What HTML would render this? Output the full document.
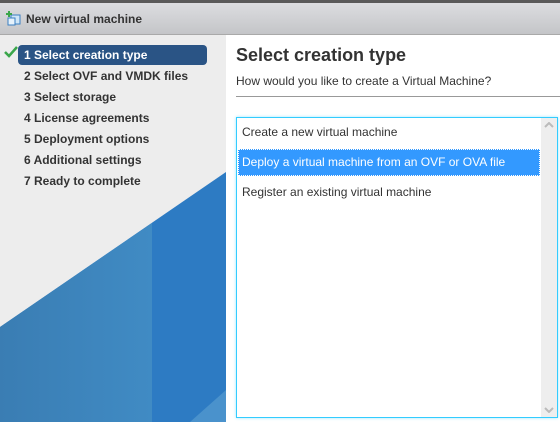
<!DOCTYPE html>
<html><head><style>
body{margin:0;width:560px;height:422px;overflow:hidden;font-family:"Liberation Sans",Arial,sans-serif;background:#fff;position:relative}
.top{position:absolute;left:0;top:0;width:560px;height:3px;background:#5a5a5a}
.hdr{position:absolute;left:0;top:3px;width:560px;height:31px;background:linear-gradient(#dcdde0,#c4c5c8);border-bottom:1px solid #a9a9a9}
.hdr span{position:absolute;left:26px;top:9px;font-size:12px;font-weight:bold;color:#333}
.left{position:absolute;left:0;top:35px;width:226px;height:387px;background:#ededed;overflow:hidden}
.step{position:absolute;left:24px;font-size:12px;font-weight:bold;color:#333}
.sel{position:absolute;left:18px;top:10px;width:189px;height:20px;background:#2a5485;border-radius:4px}
.right{position:absolute;left:226px;top:35px;width:334px;height:387px;background:#fff}
h1{position:absolute;left:10px;top:10px;margin:0;font-size:18px;font-weight:bold;color:#333}
.sub{position:absolute;left:10px;top:39px;font-size:12px;color:#333}
.line{position:absolute;left:10px;top:61px;width:324px;height:1px;background:#999}
.box{position:absolute;left:236px;top:117px;width:320px;height:299px;border:1px solid #33ccff;box-shadow:0 0 3px #9ee6ff;background:#fff}
.sb{position:absolute;right:0;top:0;width:16px;height:299px;background:#eee}
.row{position:absolute;left:5px;font-size:12px;color:#333}
.hl{position:absolute;left:1px;top:31px;width:302px;height:27px;background:#3399ff;outline:1px dotted #fff;outline-offset:-1px}
</style></head><body>
<div class="top"></div>
<div class="hdr">
<svg style="position:absolute;left:6px;top:8px" width="16" height="16" viewBox="0 0 16 16"><rect x="5" y="4" width="9" height="9" fill="#cfe6f7" stroke="#3a7fc2"/><rect x="2" y="7" width="7" height="7" fill="#e6f2fb" stroke="#3a7fc2"/><path d="M3 0v6M0 3h6" stroke="#3aa64a" stroke-width="2"/></svg>
<span>New virtual machine</span></div>
<div class="left">
<svg style="position:absolute;left:0;top:0" width="226" height="387">
<defs><linearGradient id="g" x1="0" x2="1"><stop offset="0" stop-color="#3a7db3"/><stop offset="1" stop-color="#408bc4"/></linearGradient></defs>
<polygon points="226,137 0,292 0,387 226,387" fill="#2d7bc3"/>
<polygon points="152,188 0,292 0,387 152,387" fill="url(#g)"/>
<polygon points="226,355 190,387 226,387" fill="#4a92cc"/>
</svg>
<div class="sel"></div>
<svg style="position:absolute;left:4px;top:11px" width="14" height="12"><path d="M1 6l4 4 8-9" stroke="#3aa64a" stroke-width="2.5" fill="none"/></svg>
<div class="step" style="top:13px;color:#fff">1 Select creation type</div>
<div class="step" style="top:34px">2 Select OVF and VMDK files</div>
<div class="step" style="top:55px">3 Select storage</div>
<div class="step" style="top:76px">4 License agreements</div>
<div class="step" style="top:97px">5 Deployment options</div>
<div class="step" style="top:118px">6 Additional settings</div>
<div class="step" style="top:139px">7 Ready to complete</div>
</div>
<div class="right">
<h1>Select creation type</h1>
<div class="sub">How would you like to create a Virtual Machine?</div>
<div class="line"></div>
</div>
<div class="box">
<div class="sb"><svg style="position:absolute;left:3px;top:4px" width="10" height="6"><path d="M1 5l4-4 4 4" stroke="#bbb" stroke-width="2" fill="none"/></svg><svg style="position:absolute;left:3px;bottom:4px" width="10" height="6"><path d="M1 1l4 4 4-4" stroke="#bbb" stroke-width="2" fill="none"/></svg></div>
<div class="row" style="top:7px">Create a new virtual machine</div>
<div class="hl"></div>
<div class="row" style="top:37px;color:#fff">Deploy a virtual machine from an OVF or OVA file</div>
<div class="row" style="top:67px">Register an existing virtual machine</div>
</div>
</body></html>
